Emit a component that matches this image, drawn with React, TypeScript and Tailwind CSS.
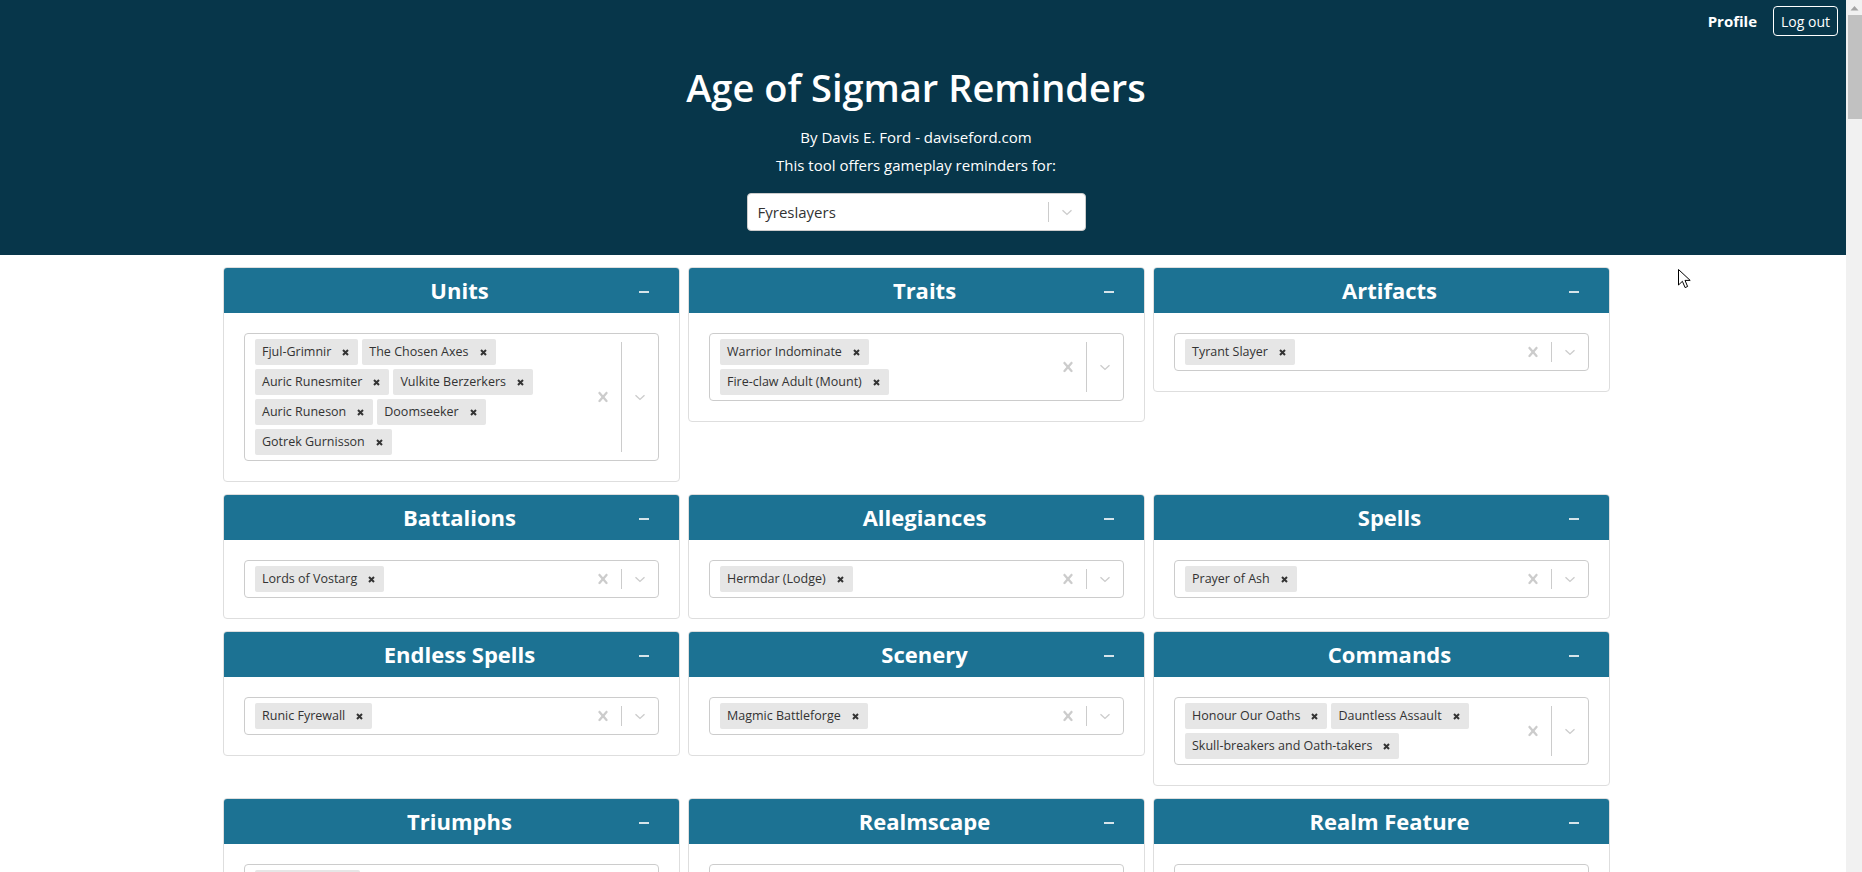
import React from "react";

type CardData = { title: string; rows: string[][]; empty?: boolean };

const rowsData: CardData[][] = [
  [
    {
      title: "Units",
      rows: [
        ["Fjul-Grimnir", "The Chosen Axes"],
        ["Auric Runesmiter", "Vulkite Berzerkers"],
        ["Auric Runeson", "Doomseeker"],
        ["Gotrek Gurnisson"],
      ],
    },
    { title: "Traits", rows: [["Warrior Indominate"], ["Fire-claw Adult (Mount)"]] },
    { title: "Artifacts", rows: [["Tyrant Slayer"]] },
  ],
  [
    { title: "Battalions", rows: [["Lords of Vostarg"]] },
    { title: "Allegiances", rows: [["Hermdar (Lodge)"]] },
    { title: "Spells", rows: [["Prayer of Ash"]] },
  ],
  [
    { title: "Endless Spells", rows: [["Runic Fyrewall"]] },
    { title: "Scenery", rows: [["Magmic Battleforge"]] },
    {
      title: "Commands",
      rows: [["Honour Our Oaths", "Dauntless Assault"], ["Skull-breakers and Oath-takers"]],
    },
  ],
  [
    { title: "Triumphs", rows: [["Bloodthirsty"]] },
    { title: "Realmscape", rows: [], empty: true },
    { title: "Realm Feature", rows: [], empty: true },
  ],
];

const SmallX = () => (
  <svg width="7" height="7" viewBox="0 0 7 7">
    <path d="M1 1L6 6M6 1L1 6" stroke="#333" strokeWidth="2" />
  </svg>
);

const ClearIcon = () => (
  <svg width="20" height="20" viewBox="0 0 20 20" fill="#cccccc">
    <path d="M14.348 14.849c-0.469 0.469-1.229 0.469-1.697 0l-2.651-3.030-2.651 3.029c-0.469 0.469-1.229 0.469-1.697 0-0.469-0.469-0.469-1.229 0-1.697l2.758-3.15-2.759-3.152c-0.469-0.469-0.469-1.228 0-1.697s1.228-0.469 1.697 0l2.652 3.031 2.651-3.031c0.469-0.469 1.228-0.469 1.697 0s0.469 1.229 0 1.697l-2.758 3.152 2.758 3.150c0.469 0.469 0.469 1.229 0 1.698z" />
  </svg>
);

const Chevron = () => (
  <svg width="20" height="20" viewBox="0 0 20 20" fill="none">
    <path d="M5.5 8.2L10 12.4L14.5 8.2" stroke="#cccccc" strokeWidth="1.4" />
  </svg>
);

const Chip = ({ label }: { label: string }) => (
  <div className="m-[2px] flex h-[26px] items-center rounded-[2px] bg-[#e6e6e6] pl-[7px] pr-[9px] text-[12.5px] text-[#333333]">
    <span>{label}</span>
    <span className="ml-[11px] flex items-center">
      <SmallX />
    </span>
  </div>
);

const Select = ({ rows, empty }: { rows: string[][]; empty?: boolean }) => (
  <div className="flex min-h-[38px] rounded-[4px] border border-[#cccccc] bg-white">
    <div className="flex flex-1 flex-col justify-center px-[8px] py-[3px]">
      {rows.map((r, i) => (
        <div key={i} className="flex">
          {r.map((c) => (
            <Chip key={c} label={c} />
          ))}
        </div>
      ))}
    </div>
    <div className="flex items-stretch">
      {!empty && (
        <div className="flex w-[36px] items-center justify-center">
          <ClearIcon />
        </div>
      )}
      <div className="my-[8px] w-px bg-[#cccccc]" />
      <div className="flex w-[36px] items-center justify-center">
        <Chevron />
      </div>
    </div>
  </div>
);

const Card = ({ data }: { data: CardData }) => (
  <div className="overflow-hidden rounded-[4px] border border-[#dedede] bg-white">
    <div className="relative flex h-[45px] items-center justify-center bg-[#1c7293] pl-[16px]">
      <span className="text-[22px] font-bold text-white">{data.title}</span>
      <span className="absolute right-[30px] top-[23px] h-[2px] w-[10px] bg-[#d6e4ea]" />
    </div>
    <div className="p-[20px]">
      <Select rows={data.rows} empty={data.empty} />
    </div>
  </div>
);

export default function App() {
  return (
    <div className="relative flex h-[872px] w-[1862px] overflow-hidden bg-white font-['Open_Sans',sans-serif]">
      <div className="h-full w-[1846px] overflow-hidden">
        <header className="h-[255px] bg-[#07364a] text-white">
          <div className="flex items-center justify-end gap-[16px] pr-[8px] pt-[6px]">
            <span className="text-[15px] font-bold">Profile</span>
            <button className="h-[30px] rounded-[4px] border border-white px-[7px] text-[14px] text-white">
              Log out
            </button>
          </div>
          <div className="flex w-[1832px] flex-col items-center">
            <h1 className="mt-[27px] text-[38px] font-semibold leading-[48px]">Age of Sigmar Reminders</h1>
            <p className="mt-[14px] text-[15px] leading-[24px]">By Davis E. Ford - daviseford.com</p>
            <p className="mt-[4px] text-[15px] leading-[24px]">This tool offers gameplay reminders for:</p>
            <div className="mt-[16px] flex h-[38px] w-[339px] rounded-[4px] border border-[#cccccc] bg-white">
              <div className="flex flex-1 items-center pl-[10px] text-[15px] text-[#333333]">Fyreslayers</div>
              <div className="my-[8px] w-px bg-[#cccccc]" />
              <div className="flex w-[36px] items-center justify-center">
                <Chevron />
              </div>
            </div>
          </div>
        </header>
        <main className="ml-[223px] mt-[12px] flex w-[1387px] flex-col gap-[12px]">
          {rowsData.map((row, i) => (
            <div key={i} className="grid grid-cols-3 items-start gap-[8px]">
              {row.map((c) => (
                <Card key={c.title} data={c} />
              ))}
            </div>
          ))}
        </main>
      </div>
      <div className="flex h-full w-[16px] flex-col items-center bg-[#f1f1f1]">
        <svg width="9" height="6" viewBox="0 0 9 6" className="mt-[5px]">
          <path d="M0.5 5.5L4.5 1L8.5 5.5Z" fill="#a3a3a3" />
        </svg>
        <div className="ml-[2px] mt-[4px] h-[104px] w-[14px] bg-[#c1c1c1]" />
      </div>
      <svg
        className="absolute left-[1678px] top-[269px]"
        width="13"
        height="20"
        viewBox="0 0 13 20"
      >
        <path
          d="M0.5 0.5L0.5 16L4.4 12.3L7.1 18.6L9.6 17.5L7 11.4L12.2 11.4Z"
          fill="white"
          stroke="black"
          strokeWidth="1"
          strokeLinejoin="round"
        />
      </svg>
    </div>
  );
}
